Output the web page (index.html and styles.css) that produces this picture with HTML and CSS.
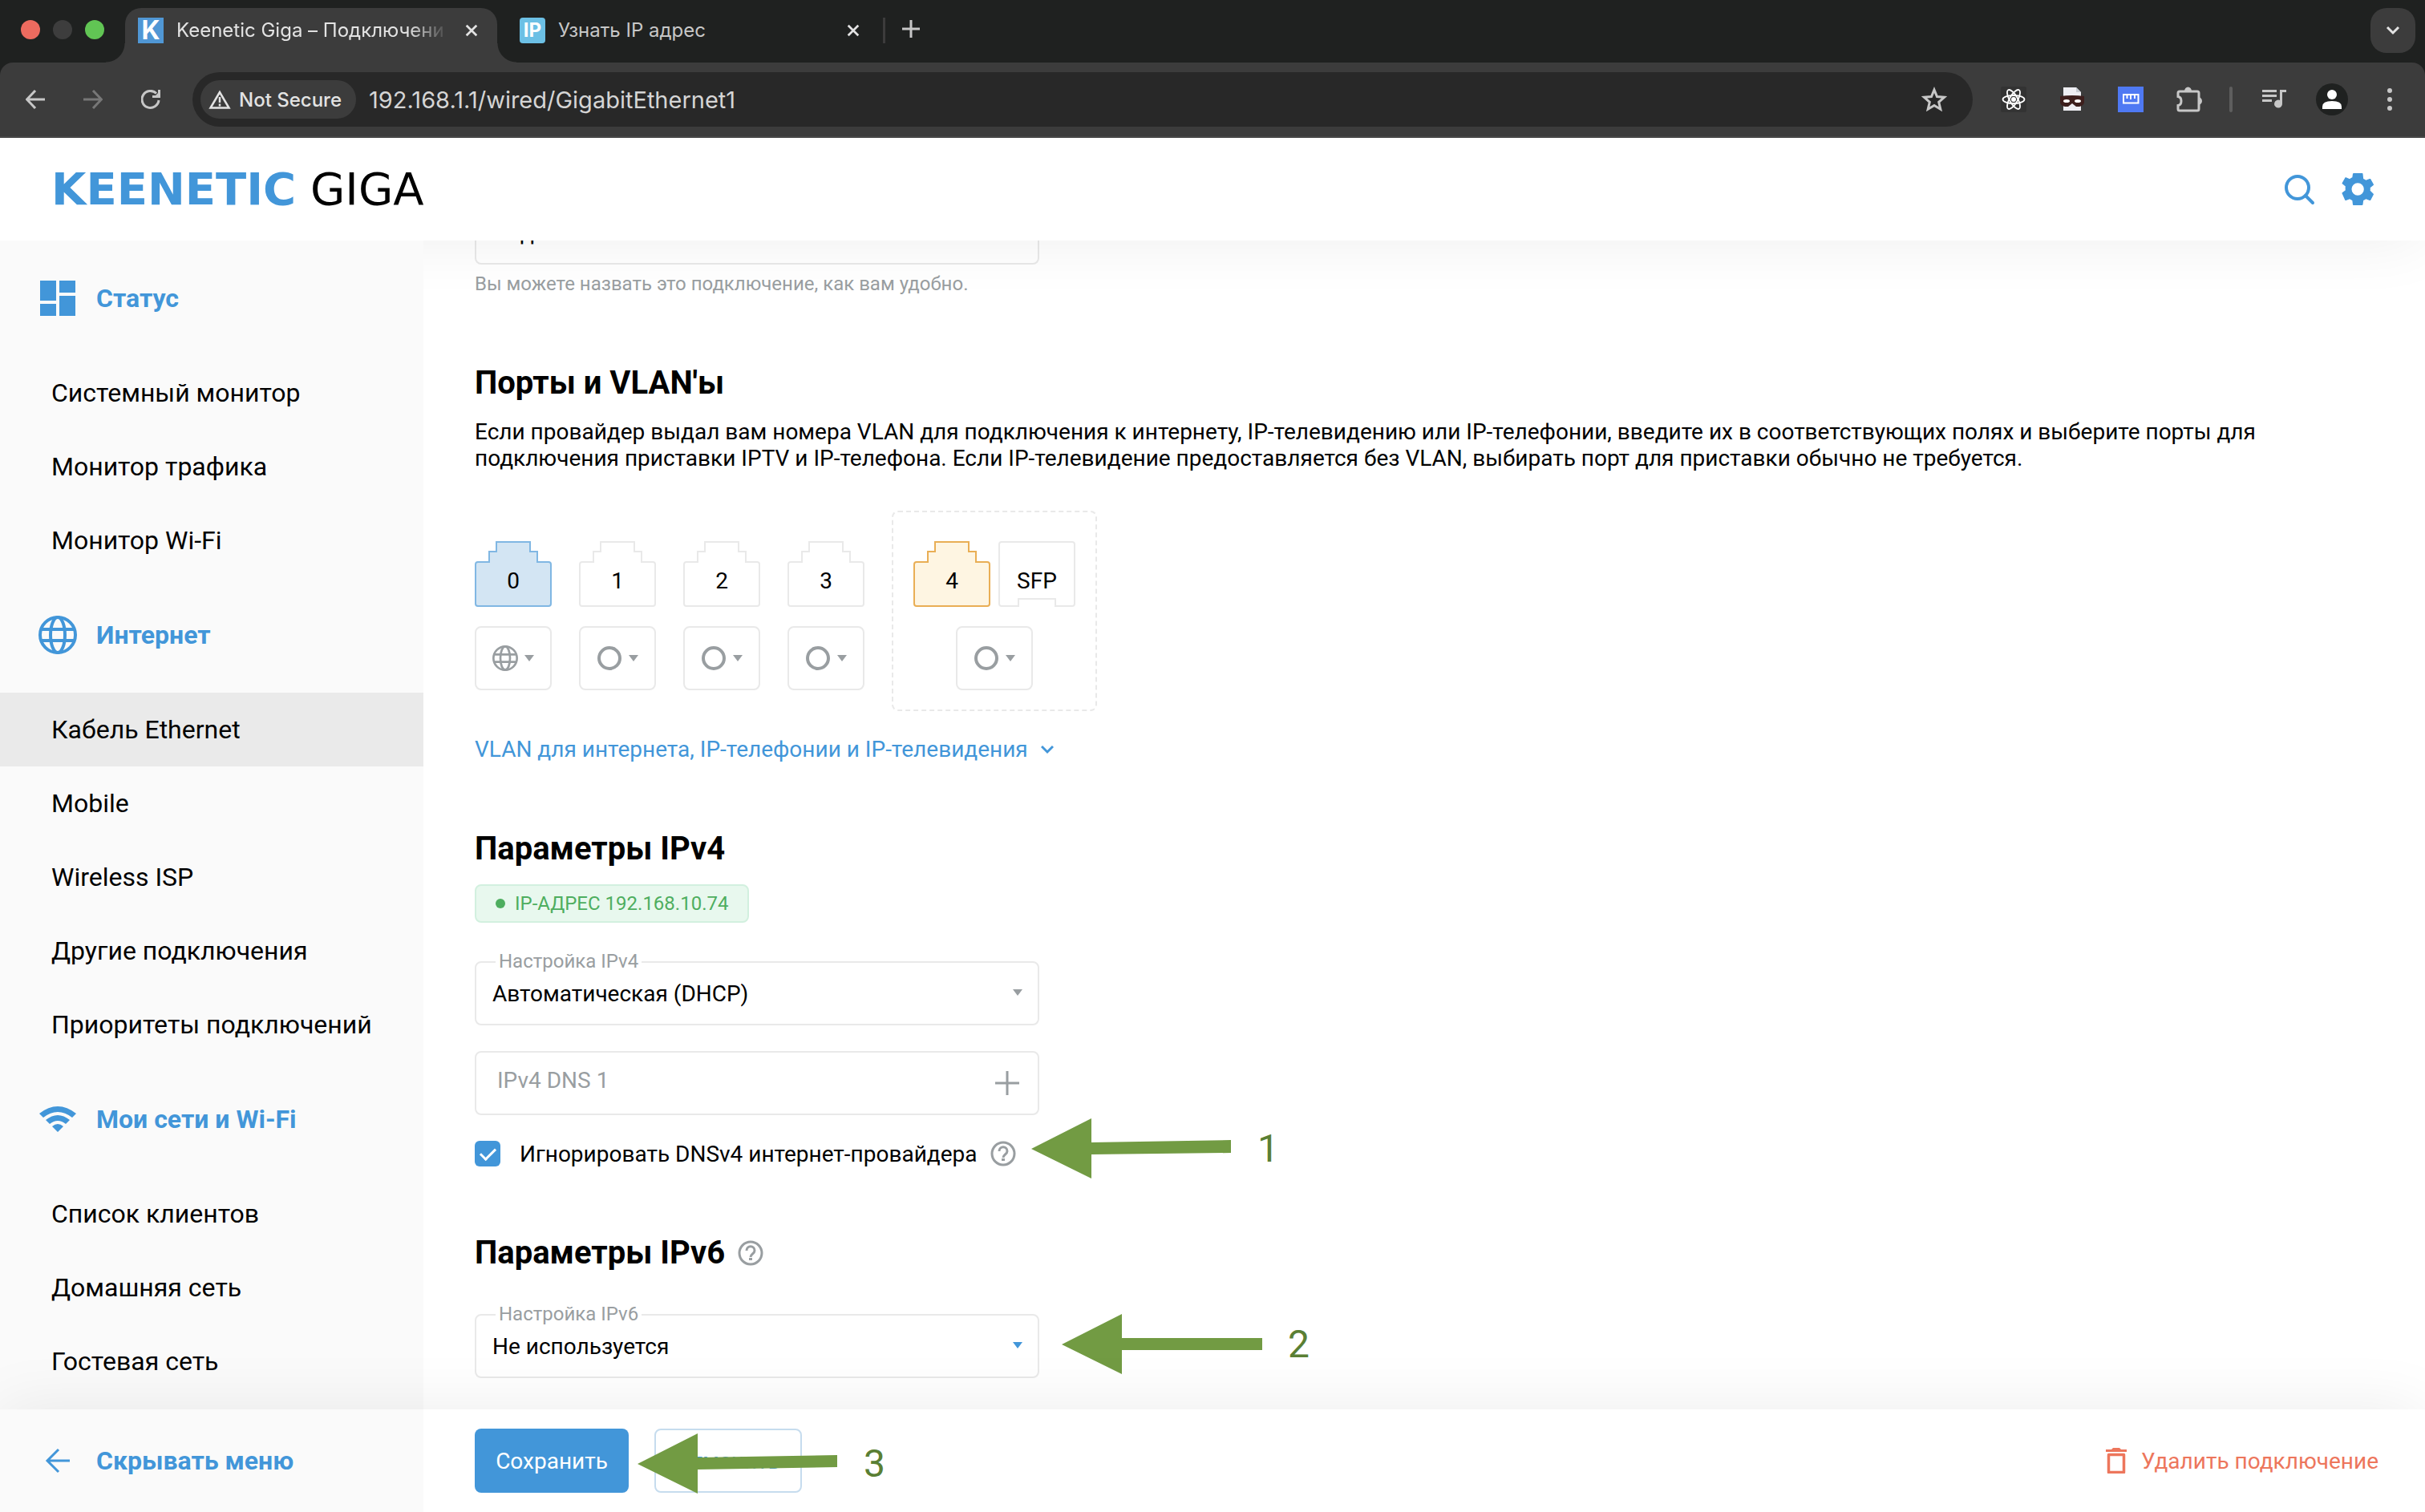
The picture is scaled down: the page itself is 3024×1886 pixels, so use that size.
FILE: index.html
```html
<!DOCTYPE html>
<html lang="ru">
<head>
    <meta charset="UTF-8">
    <meta name="viewport" content="width=device-width, initial-scale=1.0">
    <title>Keenetic Giga – Подключение</title>
    <link rel="stylesheet" href="styles.css">
</head>
<body>
<!-- Shared icons -->
<svg class="sprite" aria-hidden="true">
    <symbol id="icon-close" viewBox="0 0 20 20"><path d="M3 3l14 14M17 3L3 17" fill="none" stroke="currentColor" stroke-width="3"/></symbol>
    <symbol id="icon-arrow-left" viewBox="0 0 24 24"><path d="M24 12H2M12 1L1.500 12L12 23" fill="none" stroke="currentColor" stroke-width="3"/></symbol>
    <symbol id="icon-globe" viewBox="0 0 48 48"><g fill="none" stroke="currentColor" stroke-width="4"><circle cx="24" cy="24" r="22"/><ellipse cx="24" cy="24" rx="9" ry="22"/><path d="M3 17h42M3 31h42"/></g></symbol>
    <symbol id="icon-help" viewBox="0 0 32 32"><g fill="none" stroke="currentColor" stroke-width="3"><circle cx="16" cy="16" r="14"/><path d="M11 13c0-7 10-7 10 0c0 4-5 4-5 8"/></g><rect x="14" y="22" width="4" height="3" fill="currentColor"/></symbol>
    <symbol id="icon-ring" viewBox="0 0 32 32"><circle cx="16" cy="16" r="13" fill="none" stroke="currentColor" stroke-width="4"/></symbol>
    <symbol id="icon-caret" viewBox="0 0 12 8"><path d="M0 0h12l-6 8z" fill="currentColor"/></symbol>
    <symbol id="port-shape" viewBox="0 0 96 82"><path d="M27 1H69V13H78V26H92Q95 26 95 29V78Q95 81 92 81H4Q1 81 1 78V29Q1 26 4 26H18V13H27Z" stroke-width="2"/></symbol>
    <symbol id="sfp-shape" viewBox="0 0 96 82"><path d="M4 1H92Q95 1 95 4V78Q95 81 92 81H71V72H25V81H4Q1 81 1 78V4Q1 1 4 1Z" stroke-width="2"/></symbol>
</svg>

<!-- Browser window -->
<div class="browser">
    <div class="tab-strip">
        <div class="window-controls">
            <span class="light light-red"></span>
            <span class="light light-grey"></span>
            <span class="light light-green"></span>
        </div>
        <div class="tab tab-active">
            <span class="favicon favicon-keenetic">K</span>
            <span class="tab-title">Keenetic Giga – Подключени</span>
            <button class="tab-close" aria-label="Закрыть"><svg><use href="#icon-close"/></svg></button>
        </div>
        <div class="tab">
            <span class="favicon favicon-ip">IP</span>
            <span class="tab-title">Узнать IP адрес</span>
            <button class="tab-close" aria-label="Закрыть"><svg><use href="#icon-close"/></svg></button>
        </div>
        <span class="tab-divider"></span>
        <button class="new-tab" aria-label="Новая вкладка"><svg viewBox="0 0 22 22"><path d="M11 0v22M0 11h22" stroke="currentColor" stroke-width="3"/></svg></button>
        <button class="tab-search" aria-label="Поиск вкладок"><svg viewBox="0 0 18 12"><path d="M2 2l7 7l7-7" fill="none" stroke="currentColor" stroke-width="3"/></svg></button>
    </div>
    <div class="toolbar">
        <div class="nav-buttons">
            <button aria-label="Назад"><svg viewBox="0 0 24 24"><use href="#icon-arrow-left"/></svg></button>
            <button class="forward" aria-label="Вперёд"><svg viewBox="0 0 24 24"><path d="M0 12h22M12 1l10.500 11L12 23" fill="none" stroke="currentColor" stroke-width="3"/></svg></button>
            <button aria-label="Обновить"><svg viewBox="0 0 24 24"><path d="M22 13A10.500 10.500 0 1 1 19 4.500" fill="none" stroke="currentColor" stroke-width="3"/><path d="M24 0v10H14V7l4 0l3-3V0z" fill="currentColor"/></svg></button>
        </div>
        <div class="address-bar">
            <button class="security-chip">
                <svg viewBox="0 0 28 24"><path d="M14 3L2.500 22.500h23z" fill="none" stroke="currentColor" stroke-width="2.500"/><path d="M14 9v7M14 17.500v3" stroke="currentColor" stroke-width="2.500"/></svg>
                Not Secure
            </button>
            <input class="url" type="text" aria-label="Адрес" value="192.168.1.1/wired/GigabitEthernet1">
            <button class="bookmark" aria-label="В закладки"><svg viewBox="0 0 32 32"><path d="M16 4l3.500 8.500l9 .8l-6.800 6l2.100 8.900L16 23.500L8.200 28.200l2.100-8.900l-6.800-6l9-.8z" fill="none" stroke="currentColor" stroke-width="3"/></svg></button>
        </div>
        <div class="extensions">
            <button aria-label="React">
                <svg viewBox="0 0 32 32"><rect width="32" height="32" rx="2" fill="#333"/><g fill="none" stroke="#fff" stroke-width="1.800"><ellipse cx="16" cy="16" rx="13.500" ry="5"/><ellipse cx="16" cy="16" rx="13.500" ry="5" transform="rotate(60 16 16)"/><ellipse cx="16" cy="16" rx="13.500" ry="5" transform="rotate(120 16 16)"/></g><circle cx="16" cy="16" r="3" fill="#fff"/></svg>
            </button>
            <button aria-label="Маска">
                <svg viewBox="0 0 32 32"><path d="M5 1h16l6 6v23H5z" fill="#eeeef3"/><path d="M21 1v6h6z" fill="#c9cdd4"/><path d="M1 12q15-2 30 0v8q-1 4-6 5h-4l-5-4l-5 4H7q-5-1-6-5z" fill="#3d1f1d"/><ellipse cx="9" cy="18" rx="4" ry="2" fill="#fff"/><ellipse cx="23" cy="18" rx="4" ry="2" fill="#fff"/></svg>
            </button>
            <button aria-label="Линейка">
                <svg viewBox="0 0 32 32"><rect width="32" height="32" fill="#4f79f3"/><path d="M7 10h18.500v10.500H7zM11.500 10v5M16 10v6M21 10v5" fill="none" stroke="#fff" stroke-width="2"/></svg>
            </button>
            <button aria-label="Расширения">
                <svg viewBox="0 0 32 32"><path d="M4 6Q2 6 2 8V12.500Q6 13 6 18T2 23.500V28Q2 30 4 30H26Q28 30 28 28V8Q28 6 26 6Z" fill="none" stroke="currentColor" stroke-width="3"/><path d="M10 6a4.500 5.500 0 0 1 9 0zM27 13a5 5 0 0 1 0 10z" fill="currentColor"/></svg>
            </button>
        </div>
        <span class="toolbar-divider"></span>
        <div class="toolbar-end">
            <button aria-label="Медиа"><svg viewBox="0 0 32 32"><path d="M1 4h18v3H1zM1 10h18v3H1zM1 16h12v3H1z" fill="currentColor"/><path d="M23 4h8v3h-5v14a5 5 0 1 1-3-4z" fill="currentColor"/></svg></button>
            <button class="profile" aria-label="Профиль"><svg viewBox="0 0 40 40"><circle cx="20" cy="20" r="20" fill="#1f2120"/><circle cx="20" cy="14" r="6" fill="#fff"/><path d="M8 32v-3q0-7 12-7t12 7v3z" fill="#fff"/></svg></button>
            <button aria-label="Меню"><svg viewBox="0 0 32 32"><circle cx="16" cy="5" r="3" fill="currentColor"/><circle cx="16" cy="16" r="3" fill="currentColor"/><circle cx="16" cy="27" r="3" fill="currentColor"/></svg></button>
        </div>
    </div>
</div>

<!-- Page header -->
<header class="page-header">
    <a class="logo" href="/"><span class="logo-brand">KEENETIC</span> <span class="logo-model">GIGA</span></a>
    <div class="header-actions">
        <button aria-label="Поиск"><svg viewBox="0 0 40 40"><circle cx="17" cy="18" r="14" fill="none" stroke="currentColor" stroke-width="4"/><path d="M27 28l9 9" stroke="currentColor" stroke-width="4" stroke-linecap="round"/></svg></button>
        <button aria-label="Настройки"><svg viewBox="0 0 24 24"><path fill="currentColor" d="M21.400 13.100c0-.4.100-.7.100-1.100s0-.7-.1-1.100l2.400-1.900c.2-.2.300-.5.100-.7l-2.200-3.900c-.1-.2-.4-.3-.7-.2l-2.800 1.100c-.6-.4-1.200-.8-1.900-1.100L15.900.5c0-.3-.3-.5-.6-.5H9c-.3 0-.5.200-.6.500L8 3.200c-.7.300-1.300.7-1.900 1.100L3.300 3.200c-.3-.1-.6 0-.7.200L.4 7.300c-.1.200-.1.500.1.700l2.400 1.900c-.1.400-.1.700-.1 1.100s0 1.300.1 1.700L.5 14.600c-.2.200-.3.500-.1.700l2.200 4.900c.1.200.4.300.7.200l2.800-1.100c.6.400 1.200.8 1.900 1.100l.4 3.100c0 .3.300.5.600.5h6.300c.3 0 .5-.2.600-.5l.4-3.100c.7-.3 1.300-.7 1.900-1.100l2.800 1.100c.3.100.6 0 .7-.2l2.200-4.100c.1-.2.100-.5-.1-.7zM12.100 16.600a4.600 4.600 0 1 1 0-9.200a4.600 4.600 0 0 1 0 9.200z"/></svg></button>
    </div>
</header>

<div class="layout">
    <nav class="sidebar">
        <h3><svg viewBox="0 0 48 48"><path d="M2 2h20v25H2zM26 2h20v15H26zM2 31h20v15H2zM26 21h20v25H26z" fill="currentColor"/></svg>Статус</h3>
        <a href="#">Системный монитор</a>
        <a href="#">Монитор трафика</a>
        <a href="#">Монитор Wi-Fi</a>
        <h3><svg><use href="#icon-globe"/></svg>Интернет</h3>
        <a class="active" href="#">Кабель Ethernet</a>
        <a href="#">Mobile</a>
        <a href="#">Wireless ISP</a>
        <a href="#">Другие подключения</a>
        <a href="#">Приоритеты подключений</a>
        <h3><svg viewBox="0 0 48 48"><path d="M1 17Q24-1 47 17L42 22Q24 8 6 22ZM9 25Q24 13 39 25L34 30Q24 22 14 30ZM17 33Q24 27 31 33L24 40Z" fill="currentColor"/></svg>Мои сети и Wi-Fi</h3>
        <a href="#">Список клиентов</a>
        <a href="#">Домашняя сеть</a>
        <a href="#">Гостевая сеть</a>
    </nav>

    <main class="content">
        <div class="field field-name">
            <input type="text" aria-label="Имя подключения" value="Подключение Ethernet">
        </div>
        <p class="hint">Вы можете назвать это подключение, как вам удобно.</p>

        <h2>Порты и VLAN'ы</h2>
        <p class="description">Если провайдер выдал вам номера VLAN для подключения к интернету, IP-телевидению или IP-телефонии, введите их в соответствующих полях и выберите порты для подключения приставки IPTV и IP-телефона. Если IP-телевидение предоставляется без VLAN, выбирать порт для приставки обычно не требуется.</p>

        <div class="ports">
            <div class="port-column">
                <span class="port port-internet"><svg><use href="#port-shape"/></svg><b>0</b></span>
                <button class="port-role" aria-label="Порт 0"><svg class="role-icon"><use href="#icon-globe"/></svg><svg class="caret"><use href="#icon-caret"/></svg></button>
            </div>
            <div class="port-column">
                <span class="port"><svg><use href="#port-shape"/></svg><b>1</b></span>
                <button class="port-role" aria-label="Порт 1"><svg class="role-icon"><use href="#icon-ring"/></svg><svg class="caret"><use href="#icon-caret"/></svg></button>
            </div>
            <div class="port-column">
                <span class="port"><svg><use href="#port-shape"/></svg><b>2</b></span>
                <button class="port-role" aria-label="Порт 2"><svg class="role-icon"><use href="#icon-ring"/></svg><svg class="caret"><use href="#icon-caret"/></svg></button>
            </div>
            <div class="port-column">
                <span class="port"><svg><use href="#port-shape"/></svg><b>3</b></span>
                <button class="port-role" aria-label="Порт 3"><svg class="role-icon"><use href="#icon-ring"/></svg><svg class="caret"><use href="#icon-caret"/></svg></button>
            </div>
            <div class="port-column port-combo">
                <div class="port-pair">
                    <span class="port port-used"><svg><use href="#port-shape"/></svg><b>4</b></span>
                    <span class="port"><svg><use href="#sfp-shape"/></svg><b>SFP</b></span>
                </div>
                <button class="port-role" aria-label="Порт 4 / SFP"><svg class="role-icon"><use href="#icon-ring"/></svg><svg class="caret"><use href="#icon-caret"/></svg></button>
            </div>
        </div>

        <a class="vlan-link" href="#">VLAN для интернета, IP-телефонии и IP-телевидения <svg viewBox="0 0 16 12"><path d="M1 2l7 7l7-7" fill="none" stroke="currentColor" stroke-width="3"/></svg></a>

        <h2>Параметры IPv4</h2>
        <div class="ip-badge"><span class="dot"></span>IP-АДРЕС 192.168.10.74</div>

        <div class="field">
            <label for="ipv4">Настройка IPv4</label>
            <select id="ipv4"><option>Автоматическая (DHCP)</option></select>
            <svg class="caret"><use href="#icon-caret"/></svg>
        </div>
        <div class="field field-dns">
            <input type="text" aria-label="IPv4 DNS 1" placeholder="IPv4 DNS 1">
            <button class="add" aria-label="Добавить"><svg viewBox="0 0 30 30"><path d="M15 0v30M0 15h30" stroke="currentColor" stroke-width="3"/></svg></button>
        </div>
        <div class="check-row">
            <input type="checkbox" id="ignoreDns" checked>
            <label for="ignoreDns">Игнорировать DNSv4 интернет-провайдера</label>
            <svg class="help"><use href="#icon-help"/></svg>
            <div class="callout callout-1">
                <svg viewBox="0 0 250 76"><path d="M0 38L75 0V30L249 27V43L75 45V75Z" fill="currentColor"/></svg>
                <span>1</span>
            </div>
        </div>

        <h2>Параметры IPv6 <svg class="help"><use href="#icon-help"/></svg></h2>
        <div class="field field-ipv6">
            <label for="ipv6">Настройка IPv6</label>
            <select id="ipv6"><option>Не используется</option></select>
            <svg class="caret"><use href="#icon-caret"/></svg>
            <div class="callout callout-2">
                <svg viewBox="0 0 250 76"><path d="M0 38L75 0V30H250V45H75V75Z" fill="currentColor"/></svg>
                <span>2</span>
            </div>
        </div>
    </main>
</div>

<footer class="bottom-bar">
    <button class="hide-menu"><svg viewBox="0 0 32 32"><path d="M31 16H3M17 2L3 16l14 14" fill="none" stroke="currentColor" stroke-width="3"/></svg>Скрывать меню</button>
    <div class="form-actions">
        <button class="save">Сохранить</button>
        <button class="cancel">Отменить</button>
        <button class="delete"><svg viewBox="0 0 26 32"><path d="M0 2h7l2-2h8l2 2h7v3H0z" fill="currentColor"/><path d="M3.500 8.500h19V30.500h-19z" fill="none" stroke="currentColor" stroke-width="3.500" stroke-linejoin="round"/></svg>Удалить подключение</button>
        <div class="callout callout-3">
            <svg viewBox="0 0 250 76"><path d="M0 38L75 0V30L249 27V42L75 45V75Z" fill="currentColor"/></svg>
            <span>3</span>
        </div>
    </div>
</footer>
</body>
</html>
```

FILE: styles.css
```css
* {
    box-sizing: border-box;
}

body {
    font-family: Roboto, "Noto Sans", sans-serif;
    font-size: 28px;
    margin: 0;
    color: #000;
    background: #fff;
    display: flex;
    flex-direction: column;
    height: 100vh;
    overflow: hidden;
}

button {
    font: inherit;
    color: inherit;
    background: none;
    border: none;
    padding: 0;
    display: flex;
    align-items: center;
    justify-content: center;
    cursor: pointer;
}

.sprite {
    position: absolute;
    width: 0;
    height: 0;
}

/* Browser window */
.browser {
    font-family: Inter, "Noto Sans", sans-serif;
    background: #1f2120;
    color: #c7c7c7;
    flex: none;
    position: relative;
    z-index: 4;
}

.tab-strip {
    height: 78px;
    padding: 10px 12px 0 26px;
    display: flex;
}

.window-controls {
    display: flex;
    gap: 16px;
    padding-top: 15px;
    margin-right: 26px;
}

.light {
    width: 24px;
    height: 24px;
    border-radius: 50%;
}

.light-red {
    background: #ed6b5f;
}

.light-grey {
    background: #3d3d3d;
}

.light-green {
    background: #61c554;
}

.tab {
    width: 464px;
    height: 56px;
    padding: 0 8px 0 28px;
    display: flex;
    align-items: center;
    gap: 16px;
    font-size: 24px;
}

.tab-active {
    height: 68px;
    padding: 0 20px 12px 16px;
    background: #3c3c3c;
    color: #e3e3e3;
    border-radius: 20px 20px 0 0;
    position: relative;
}

/* Flared feet of the active tab */
.tab-active::before,
.tab-active::after {
    content: "";
    position: absolute;
    bottom: 0;
    width: 24px;
    height: 24px;
}

.tab-active::before {
    left: -24px;
    background: radial-gradient(circle at 0 0, #1f2120 23px, #3c3c3c 24px);
}

.tab-active::after {
    right: -24px;
    background: radial-gradient(circle at 100% 0, #1f2120 23px, #3c3c3c 24px);
}

.favicon {
    width: 32px;
    height: 32px;
    flex: none;
    color: #fff;
    font-weight: bold;
    line-height: 32px;
    text-align: center;
}

.favicon-keenetic {
    background: #5097d5;
    font-size: 32px;
}

.favicon-ip {
    background: #6cc0e5;
    font-size: 24px;
    border-radius: 4px;
}

.tab-title {
    flex: 1;
    white-space: nowrap;
    line-height: 32px;
}

.tab-active .tab-title {
    -webkit-mask-image: linear-gradient(to right, #000 85%, transparent);
    mask-image: linear-gradient(to right, #000 85%, transparent);
}

.tab-close {
    width: 24px;
    height: 24px;
    color: #e3e3e3;
}

.tab-close svg {
    width: 18px;
    height: 18px;
}

.tab-divider {
    width: 3px;
    height: 32px;
    margin: 12px 20px 0 17px;
    background: #3c3c3c;
}

.new-tab {
    width: 24px;
    height: 52px;
}

.new-tab svg {
    width: 22px;
}

.tab-search {
    width: 56px;
    height: 56px;
    margin-left: auto;
    background: #3c3c3c;
    border-radius: 20px;
    color: #e3e3e3;
}

.tab-search svg {
    width: 18px;
}

.toolbar {
    height: 94px;
    padding: 0 28px 0 32px;
    background: #3c3c3c;
    border-bottom: 2px solid #474747;
    border-radius: 16px 16px 0 0;
    display: flex;
    align-items: center;
}

.nav-buttons {
    display: flex;
    gap: 48px;
    margin-right: 40px;
}

.nav-buttons svg {
    width: 24px;
    height: 24px;
}

.forward {
    color: #777;
}

.address-bar {
    flex: 1;
    height: 68px;
    border-radius: 34px;
    background: #282828;
    display: flex;
    align-items: center;
    padding: 0 32px 0 10px;
}

.security-chip {
    height: 48px;
    padding: 0 18px 0 10px;
    gap: 10px;
    border-radius: 24px;
    background: #3c3c3c;
    color: #e3e3e3;
    font-size: 24px;
    font-weight: 500;
}

.security-chip svg {
    width: 28px;
}

.url {
    flex: 1;
    margin-left: 16px;
    padding: 0;
    border: none;
    background: none;
    color: #d5d5d5;
    font: inherit;
    font-size: 29px;
}

.bookmark svg {
    width: 32px;
}

.extensions {
    display: flex;
    gap: 41px;
    margin: 0 34px 0 35px;
}

.extensions svg,
.toolbar-end svg {
    width: 32px;
    height: 32px;
}

.toolbar-divider {
    width: 4px;
    height: 32px;
    border-radius: 2px;
    background: #5e5e5e;
}

.toolbar-end {
    display: flex;
    align-items: center;
    gap: 36px;
    margin-left: 36px;
}

.toolbar-end .profile svg {
    width: 40px;
    height: 40px;
}

/* Page header */
.page-header {
    height: 128px;
    flex: none;
    padding: 0 64px;
    background: #fff;
    box-shadow: 0 0 80px rgba(0, 0, 0, 0.07);
    display: flex;
    align-items: center;
    justify-content: space-between;
    position: relative;
    z-index: 1;
}

.logo {
    font-family: "DejaVu Sans", sans-serif;
    font-size: 56px;
    line-height: 64px;
    color: #000;
    text-decoration: none;
}

.logo-brand {
    color: #4296d9;
    font-weight: bold;
}

.header-actions {
    display: flex;
    gap: 32px;
    color: #4296d9;
}

.header-actions svg {
    width: 40px;
    height: 40px;
}

/* Sidebar */
.layout {
    flex: 1;
    min-height: 0;
    display: flex;
}

.sidebar {
    width: 528px;
    flex: none;
    background: #fafafa;
    position: relative;
    z-index: 2;
    font-size: 32px;
}

.sidebar h3 {
    height: 144px;
    margin: 0;
    padding-left: 48px;
    display: flex;
    align-items: center;
    gap: 24px;
    font-size: 32px;
    font-weight: bold;
    color: #4296d9;
}

.sidebar h3 svg {
    width: 48px;
    height: 48px;
}

.sidebar a {
    display: block;
    padding-left: 64px;
    line-height: 92px;
    color: #000;
    text-decoration: none;
}

.sidebar a.active {
    background: #eaeaea;
}

/* Connection settings */
.content {
    flex: 1;
    min-width: 0;
    padding: 0 58px 0 64px;
}

.content h2 {
    margin: 84px 0 20px;
    font-size: 40px;
    line-height: 48px;
    font-weight: bold;
    display: flex;
    align-items: center;
    gap: 16px;
}

.field {
    width: 704px;
    max-width: 100%;
    margin-top: 48px;
    position: relative;
}

/* The name field is scrolled under the header */
.field-name {
    margin-top: -50px;
}

.field-dns {
    margin-top: 32px;
}

.field-ipv6 {
    margin-top: 52px;
}

.field input,
.field select {
    display: block;
    width: 100%;
    height: 80px;
    padding: 0 20px;
    border: 2px solid #e9e9e9;
    border-radius: 8px;
    background: transparent;
    color: #000;
    font: inherit;
    appearance: none;
}

.field-dns input {
    padding: 0 72px 8px 26px;
}

.field input::placeholder {
    color: #999ea1;
}

.field label {
    position: absolute;
    top: -16px;
    left: 26px;
    padding: 0 4px;
    background: #fff;
    color: #999ea1;
    font-size: 24px;
    line-height: 32px;
}

.field .caret {
    position: absolute;
    top: 35px;
    right: 21px;
    pointer-events: none;
}

.field-ipv6 .caret {
    color: #4296d9;
}

.caret {
    width: 12px;
    height: 8px;
    color: #999ea1;
}

.add {
    position: absolute;
    top: 25px;
    right: 25px;
    color: #999ea1;
}

.add svg {
    width: 30px;
    height: 30px;
}

.hint {
    margin: 8px 0 0;
    color: #999ea1;
    font-size: 24px;
    line-height: 32px;
}

.description {
    margin: 0 0 49px;
    line-height: 33px;
}

.ports {
    display: flex;
    align-items: flex-end;
    gap: 34px;
}

.port-column {
    display: flex;
    flex-direction: column;
    align-items: center;
    gap: 24px;
    padding-bottom: 26px;
}

.port-combo {
    width: 256px;
    padding: 36px 0 24px;
    border: 2px dashed #e9e9e9;
    border-radius: 8px;
}

.port-pair {
    display: flex;
    gap: 10px;
}

.port {
    width: 96px;
    height: 82px;
    display: grid;
    fill: #fff;
    stroke: #e9e9e9;
}

.port svg,
.port b {
    grid-area: 1 / 1;
    width: 96px;
    height: 82px;
}

.port b {
    padding-top: 18px;
    font-weight: normal;
    line-height: 64px;
    text-align: center;
}

.port-internet {
    fill: #d3e5f3;
    stroke: #80b7e3;
}

.port-used {
    fill: #fef5e2;
    stroke: #e9ae55;
}

.port-role {
    width: 96px;
    height: 80px;
    gap: 8px;
    border: 2px solid #e9e9e9;
    border-radius: 8px;
    color: #999ea1;
}

.role-icon {
    width: 32px;
    height: 32px;
}

.vlan-link {
    display: flex;
    align-items: center;
    gap: 16px;
    margin-top: 32px;
    line-height: 32px;
    color: #4296d9;
    text-decoration: none;
}

.vlan-link svg {
    width: 16px;
    height: 12px;
}

.ip-badge {
    display: inline-flex;
    align-items: center;
    gap: 12px;
    height: 48px;
    padding: 0 24px;
    border: 2px solid #d2f0df;
    border-radius: 8px;
    background: #e8f8ee;
    color: #4eae5f;
    font-size: 24px;
}

.dot {
    width: 12px;
    height: 12px;
    border-radius: 50%;
    background: #4eae5f;
}

.check-row {
    margin-top: 32px;
    height: 32px;
    display: flex;
    align-items: center;
    position: relative;
}

.check-row input {
    appearance: none;
    width: 32px;
    height: 32px;
    margin: 0 24px 0 0;
    border-radius: 6px;
    background: #4296d9;
    display: grid;
    place-items: center;
}

.check-row input::before {
    content: "";
    width: 16px;
    height: 8px;
    border: solid #fff;
    border-width: 0 0 3px 3px;
    transform: translateY(-2px) rotate(-45deg);
}

.check-row .help {
    margin-left: 16px;
}

.help {
    width: 32px;
    height: 32px;
    color: #999ea1;
}

/* Numbered arrows over the page */
.callout {
    position: absolute;
    display: flex;
    align-items: center;
    gap: 32px;
    color: #729b43;
}

.callout svg {
    width: 250px;
    height: 76px;
}

.callout span {
    font-size: 48px;
    line-height: 76px;
    color: #5a7f34;
}

.callout-1 {
    left: 694px;
    top: -28px;
}

.callout-2 {
    left: 732px;
    top: 0;
}

.callout-3 {
    left: 267px;
    top: 30px;
}

/* Bottom bar */
.bottom-bar {
    height: 128px;
    flex: none;
    display: flex;
    background: #fff;
    box-shadow: 0 0 80px rgba(0, 0, 0, 0.08);
    position: relative;
    z-index: 3;
}

.hide-menu {
    width: 528px;
    padding-left: 56px;
    gap: 32px;
    justify-content: flex-start;
    background: #fafafa;
    color: #4296d9;
    font-size: 32px;
    font-weight: bold;
}

.hide-menu svg {
    width: 32px;
}

.form-actions {
    flex: 1;
    padding: 0 58px 0 64px;
    display: flex;
    align-items: center;
    gap: 32px;
    position: relative;
}

.save,
.cancel {
    height: 80px;
    border-radius: 8px;
}

.save {
    width: 192px;
    background: #4296d9;
    color: #fff;
}

.cancel {
    width: 184px;
    border: 2px solid #c6dcee;
    color: #4296d9;
}

.delete {
    margin-left: auto;
    gap: 18px;
    color: #ed765c;
}

.delete svg {
    width: 26px;
    height: 32px;
}
```
